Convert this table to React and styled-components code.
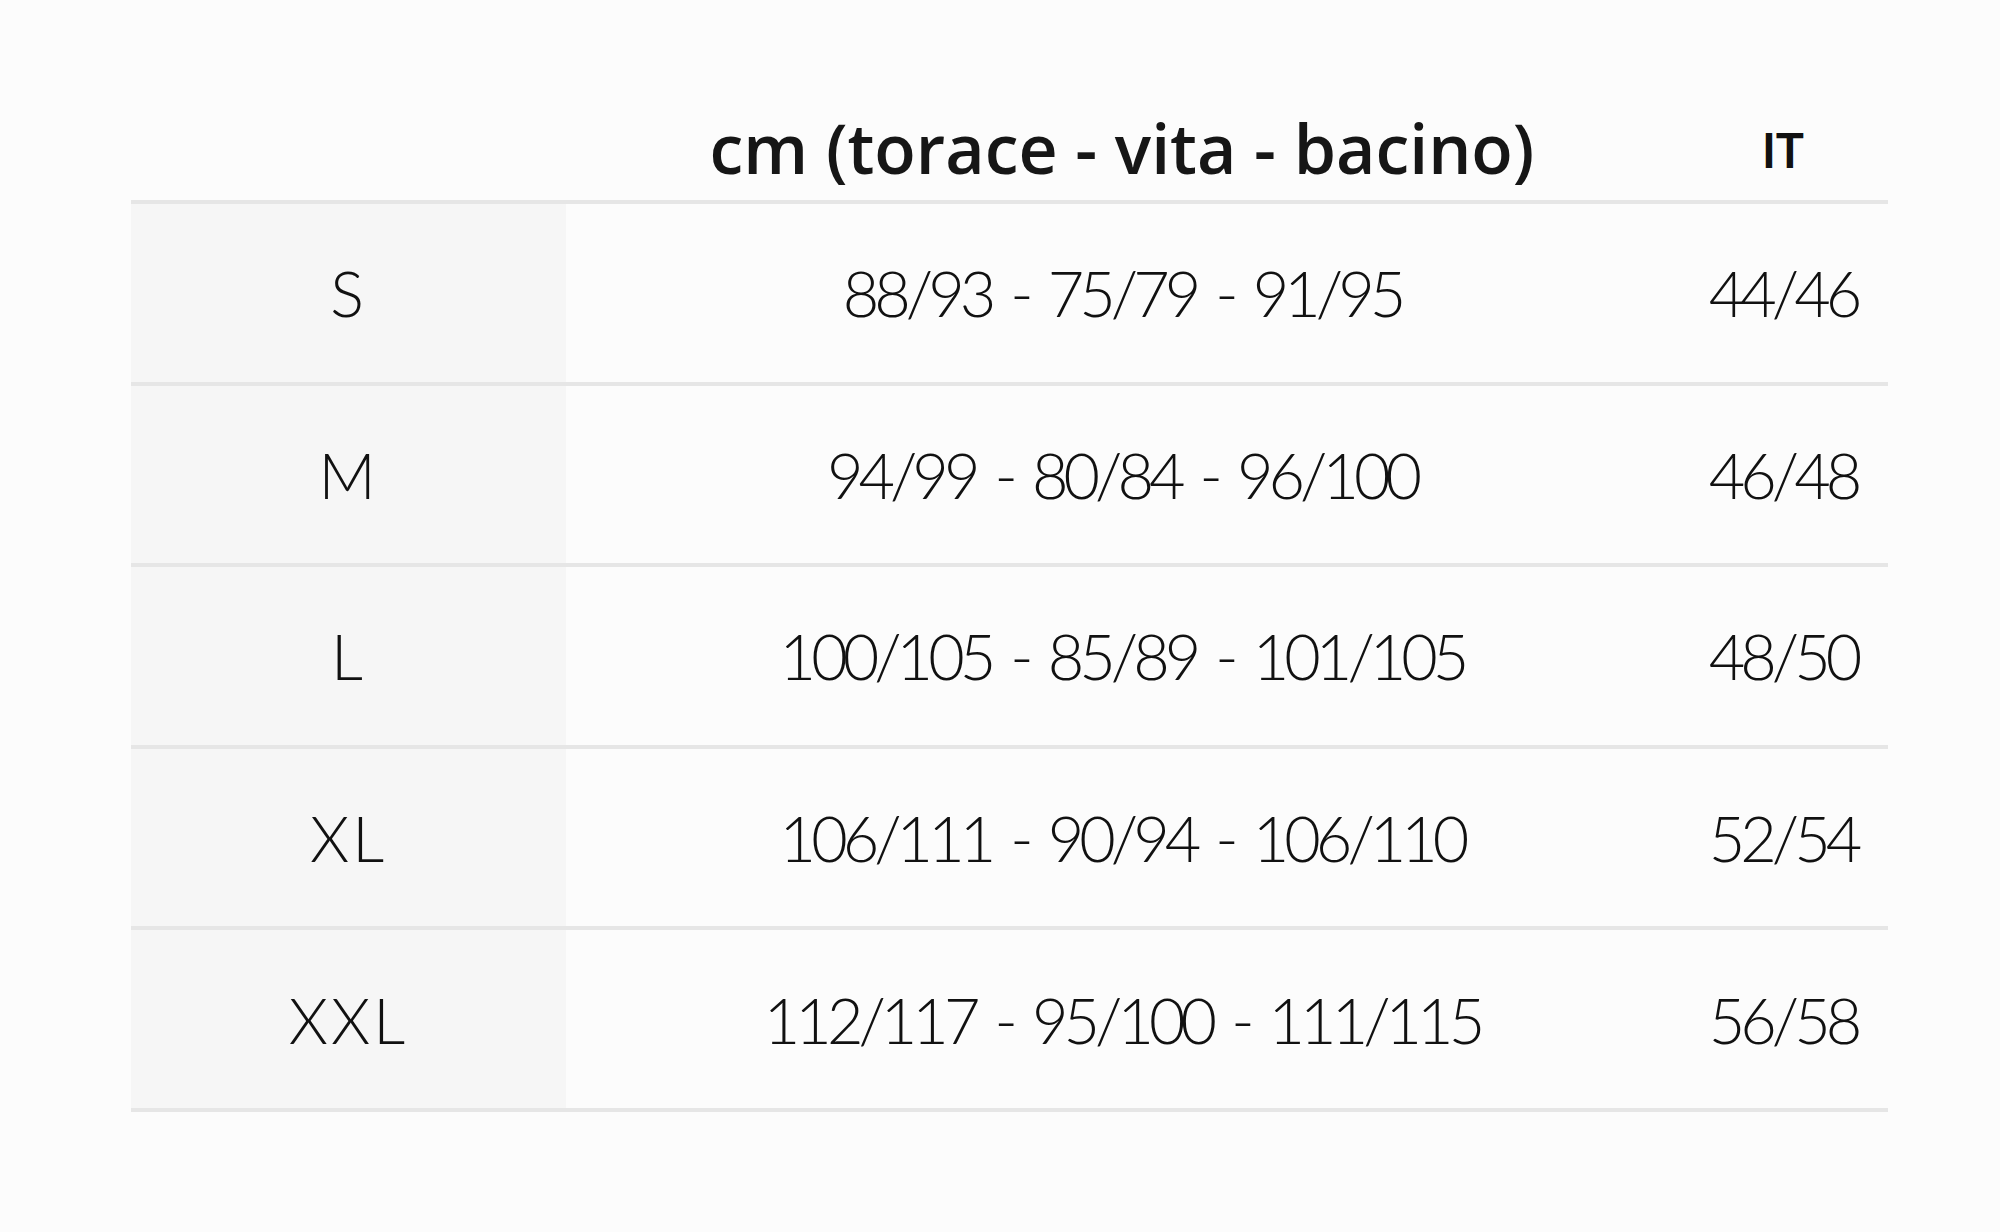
import React from "react";
import styled, { createGlobalStyle } from "styled-components";

const Global = createGlobalStyle`
  html, body { margin: 0; padding: 0; background: #fcfcfc; }
  body { font-family: "Lato", "Noto Sans", sans-serif; color: #111; }
`;

const Page = styled.div`
  width: 2000px;
  height: 1232px;
  box-sizing: border-box;
  padding: 0 112px 0 131px;
  background: #fcfcfc;
`;

const Table = styled.div`
  display: grid;
  grid-template-columns: 435px 1fr 210px;
`;

const HeadCell = styled.div`
  height: 204px;
  box-sizing: border-box;
  display: flex;
  align-items: flex-end;
  justify-content: center;
  padding-bottom: ${(p) => p.$pb || 0}px;
  border-bottom: 4px solid #e6e6e6;
`;

const HeadMain = styled.span`
  font-family: "Open Sans", "Noto Sans", sans-serif;
  font-weight: 600;
  font-size: 68px;
  line-height: 1;
  color: #161616;
`;

const HeadIT = styled.span`
  font-family: "Lato", sans-serif;
  font-weight: 700;
  font-size: 47px;
  line-height: 1;
  color: #111;
`;

const Cell = styled.div`
  height: 181.6px;
  box-sizing: border-box;
  border-bottom: 4px solid #e6e6e6;
  display: flex;
  align-items: center;
  justify-content: center;
  background: ${(p) => (p.$label ? "#f6f6f6" : "transparent")};
  font-family: "Lato", sans-serif;
  font-weight: 300;
  font-size: 63px;
  letter-spacing: ${(p) => (p.$label ? "3px" : "-5px")};
  word-spacing: 7px;
  color: #111;
`;

const rows = [
  ["S", "88/93 - 75/79 - 91/95", "44/46"],
  ["M", "94/99 - 80/84 - 96/100", "46/48"],
  ["L", "100/105 - 85/89 - 101/105", "48/50"],
  ["XL", "106/111 - 90/94 - 106/110", "52/54"],
  ["XXL", "112/117 - 95/100 - 111/115", "56/58"],
];

export default function App() {
  return (
    <>
      <Global />
      <Page>
        <Table>
          <HeadCell />
          <HeadCell $pb={18}>
            <HeadMain>cm (torace - vita - bacino)</HeadMain>
          </HeadCell>
          <HeadCell $pb={26}>
            <HeadIT>IT</HeadIT>
          </HeadCell>
          {rows.map(([size, cm, it]) => (
            <React.Fragment key={size}>
              <Cell $label>{size}</Cell>
              <Cell>{cm}</Cell>
              <Cell>{it}</Cell>
            </React.Fragment>
          ))}
        </Table>
      </Page>
    </>
  );
}
